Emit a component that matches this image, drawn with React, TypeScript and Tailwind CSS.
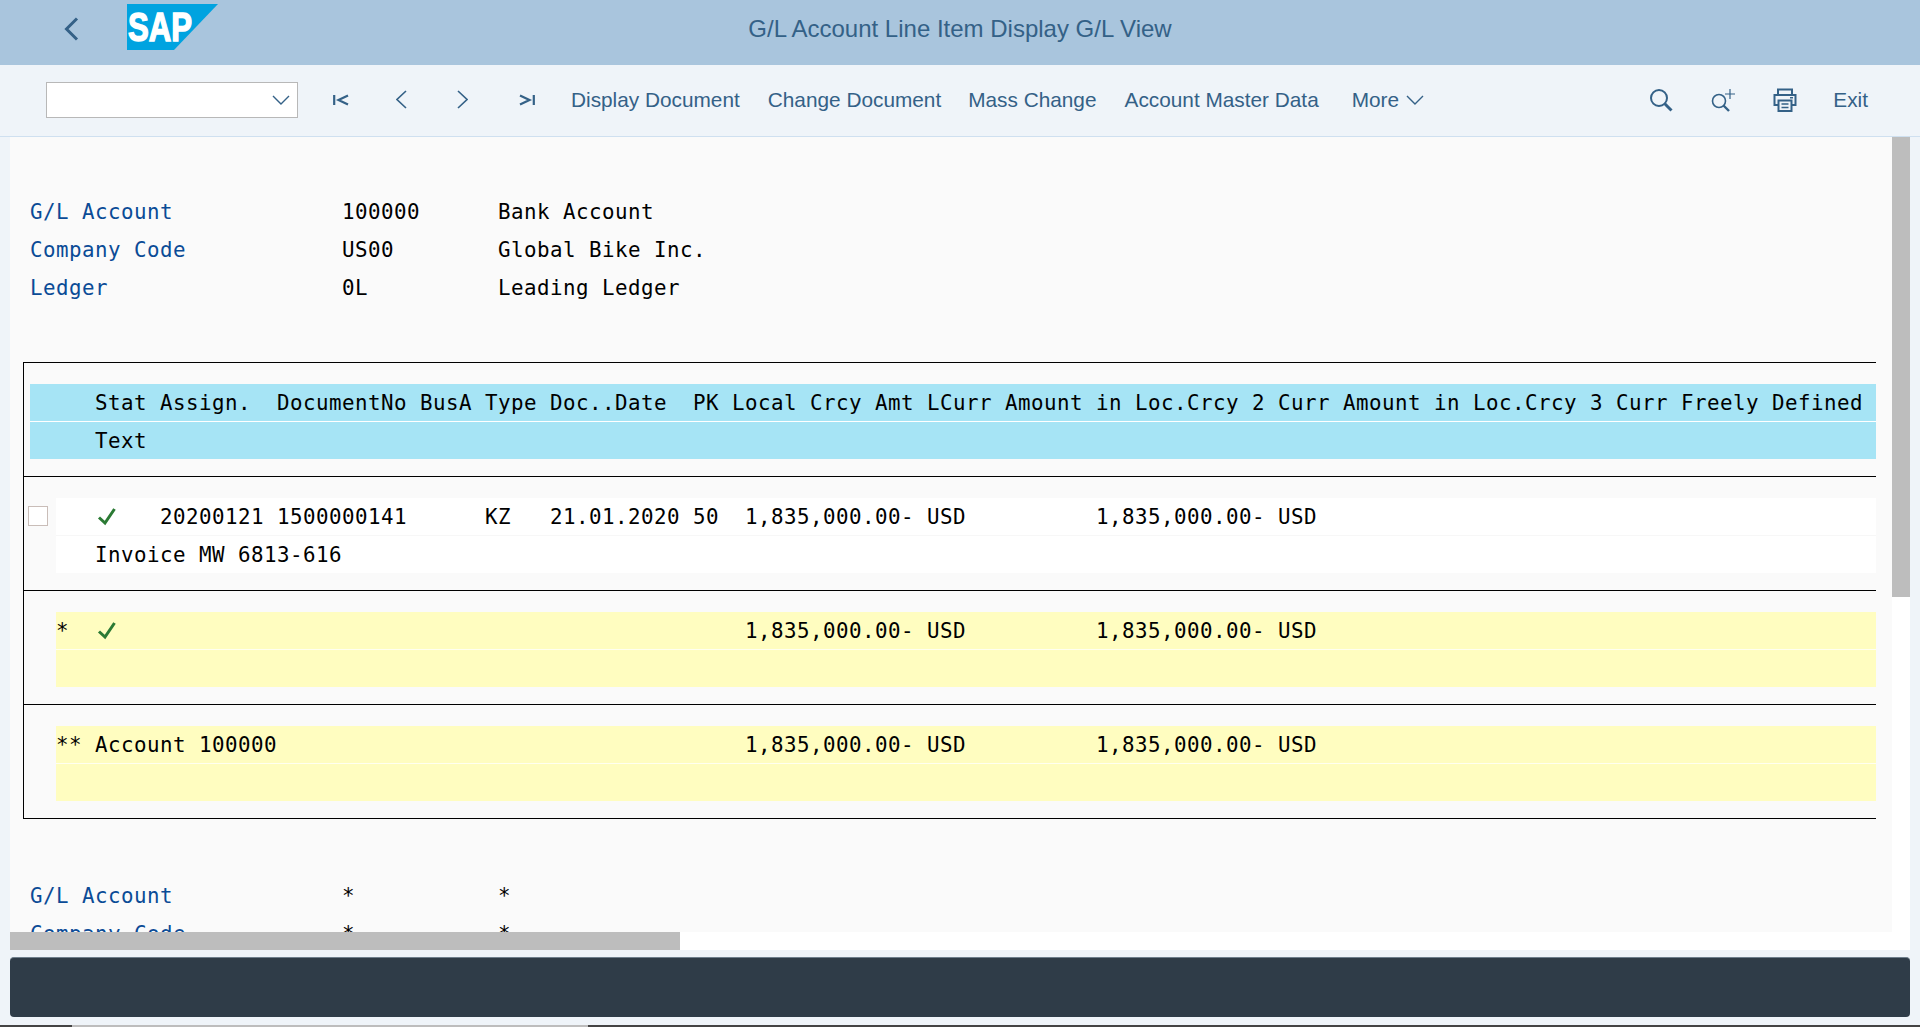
import React from "react"

const monoRow = "h-[38px] leading-[38px] whitespace-pre"
const lastRow = "h-[37px] leading-[39px] whitespace-pre"

function Check() {
    return (
        <span className="inline-block w-[26px] h-[38px] align-top">
            <svg width="26" height="38" viewBox="0 0 26 38" fill="none">
                <path d="M4 19.5 L10 25 L19.5 11" stroke="#2b7a34" strokeWidth="3" />
            </svg>
        </span>
    )
}

function Chevron({ dir, w, h }: { dir: "left" | "right", w: number, h: number }) {
    const d = dir === "left" ? `M${w - 1} 1 L1 ${h / 2} L${w - 1} ${h - 1}` : `M1 1 L${w - 1} ${h / 2} L1 ${h - 1}`
    return (
        <svg width={w} height={h} viewBox={`0 0 ${w} ${h}`} fill="none" className="shrink-0">
            <path d={d} stroke="#346187" strokeWidth="1.6" />
        </svg>
    )
}

function Header() {
    return (
        <div className="h-[65px] shrink-0 bg-[#a9c5dd] pb-[8px] grid grid-cols-[1fr_auto_1fr] items-center">
            <div className="flex items-center">
                <div className="ml-[64px]">
                    <svg width="15" height="24" viewBox="0 0 15 24" fill="none">
                        <path d="M13 1.5 L2.5 12 L13 22.5" stroke="#346187" strokeWidth="3" />
                    </svg>
                </div>
                <div className="ml-[47px] mb-[3px]">
                    <svg width="92" height="46" viewBox="0 0 92 46">
                        <polygon points="1,0 92,0 48,46 1,46" fill="#00a3e0" />
                        <text x="2" y="37" textLength="64" lengthAdjust="spacingAndGlyphs" fontFamily="Liberation Sans" fontWeight="700" fontSize="40" stroke="#fff" strokeWidth="1.5" fill="#fff">SAP</text>
                    </svg>
                </div>
            </div>
            <div className="text-[24px] text-[#346187] font-['Liberation_Sans',Arial,sans-serif]">G/L Account Line Item Display G/L View</div>
            <div />
        </div>
    )
}

function Toolbar() {
    return (
        <div className="h-[72px] shrink-0 pb-[2px] bg-[#eff4f9] border-b border-[#cfe0f0] flex items-center text-[20.8px] text-[#346187] font-['Liberation_Sans',Arial,sans-serif]">
            <div className="ml-[46px] w-[252px] h-[36px] bg-white border border-[#b8b8b8] flex items-center justify-end pr-[7px]">
                <svg width="18" height="10" viewBox="0 0 18 10" fill="none">
                    <path d="M1 1 L9 9 L17 1" stroke="#346187" strokeWidth="1.4" />
                </svg>
            </div>
            <svg width="16" height="12" viewBox="0 0 16 12" fill="none" className="ml-[35px]">
                <path d="M1.2 1 V11 M15 1.5 L5.5 6 L15 10.5" stroke="#346187" strokeWidth="2.2" />
            </svg>
            <div className="ml-[47px]"><Chevron dir="left" w={11} h={19} /></div>
            <div className="ml-[50px]"><Chevron dir="right" w={11} h={19} /></div>
            <svg width="16" height="12" viewBox="0 0 16 12" fill="none" className="ml-[51px]">
                <path d="M14.8 1 V11 M1 1.5 L10.5 6 L1 10.5" stroke="#346187" strokeWidth="2.2" />
            </svg>
            <div className="ml-[36px]">Display Document</div>
            <div className="ml-[28px]">Change Document</div>
            <div className="ml-[27px]">Mass Change</div>
            <div className="ml-[28px]">Account Master Data</div>
            <div className="ml-[33px]">More</div>
            <svg width="18" height="10" viewBox="0 0 18 10" fill="none" className="ml-[7px]">
                <path d="M1 1 L9 9 L17 1" stroke="#346187" strokeWidth="1.4" />
            </svg>
            <div className="ml-auto pr-[52px] flex items-center">
                <svg width="24" height="24" viewBox="0 0 24 24" fill="none">
                    <circle cx="10" cy="10" r="8" stroke="#346187" strokeWidth="2" />
                    <path d="M15.8 15.8 L22.5 22.5" stroke="#346187" strokeWidth="3" />
                </svg>
                <svg width="26" height="24" viewBox="0 0 26 24" fill="none" className="ml-[38px]">
                    <circle cx="8" cy="13" r="6.5" stroke="#346187" strokeWidth="1.6" />
                    <path d="M12.5 17.5 L18 23" stroke="#346187" strokeWidth="2.4" />
                    <path d="M19 1 V11 M14 6 H24" stroke="#346187" strokeWidth="1.2" />
                </svg>
                <svg width="24" height="24" viewBox="0 0 24 24" fill="none" className="ml-[36px]">
                    <path d="M5 7 V1.5 H19 V7" stroke="#346187" strokeWidth="2" />
                    <path d="M5 17 H1.5 V7 H22.5 V17 H19" stroke="#346187" strokeWidth="2" />
                    <path d="M5.5 12.5 H18.5 V23 H5.5 Z" stroke="#346187" strokeWidth="2" />
                    <path d="M8.5 16 H15.5 M8.5 19.5 H15.5 M17 9.8 H20" stroke="#346187" strokeWidth="1.6" />
                </svg>
                <div className="ml-[36px]">Exit</div>
            </div>
        </div>
    )
}

function Info({ label, a, b }: { label: string, a: string, b: string }) {
    return (
        <div className={monoRow}>
            <span className="text-[#0a4b96]">{label.padEnd(24, " ")}</span>
            <span className="text-black">{a.padEnd(12, " ")}{b}</span>
        </div>
    )
}

function Block({ children }: { children: React.ReactNode }) {
    return <div className="h-[114px] border-t border-black pt-[21px]">{children}</div>
}

function ListTable() {
    return (
        <div className="mt-[55px] ml-[13px] w-[1853px] border-l border-black text-black">
            <Block>
                <div className="ml-[6px] bg-[#a6e4f5]">
                    <div className={monoRow + " border-b border-white"}>{"     Stat Assign.  DocumentNo BusA Type Doc..Date  PK Local Crcy Amt LCurr Amount in Loc.Crcy 2 Curr Amount in Loc.Crcy 3 Curr Freely Defined"}</div>
                    <div className={lastRow}>{"     Text"}</div>
                </div>
            </Block>
            <Block>
                <div className="flex items-start">
                    <div className="w-[32px] shrink-0 pl-[4px] pt-[8px]">
                        <div className="w-[20px] h-[20px] bg-white border border-[#c9bdb8]" />
                    </div>
                    <div className="flex-1 bg-white">
                        <div className={monoRow + " border-b border-[#f7f7f7]"}>{"   "}<Check />{"   20200121 1500000141      KZ   21.01.2020 50  1,835,000.00- USD          1,835,000.00- USD"}</div>
                        <div className={lastRow}>{"   Invoice MW 6813-616"}</div>
                    </div>
                </div>
            </Block>
            <Block>
                <div className="ml-[32px] bg-[#fffdc0]">
                    <div className={monoRow + " border-b border-[#fffff0]"}>{"*  "}<Check />{"                                                1,835,000.00- USD          1,835,000.00- USD"}</div>
                    <div className="h-[37px]" />
                </div>
            </Block>
            <div className="h-[115px] border-y border-black pt-[21px]">
                <div className="ml-[32px] bg-[#fffdc0]">
                    <div className={monoRow + " border-b border-[#fffff0]"}>{"** Account 100000                                    1,835,000.00- USD          1,835,000.00- USD"}</div>
                    <div className="h-[37px]" />
                </div>
            </div>
        </div>
    )
}

function App() {
    return (
        <div className="h-[1027px] w-full flex flex-col overflow-hidden bg-[#eff4f9]">
            <Header />
            <Toolbar />
            <div className="h-[813px] shrink-0 ml-[10px] mr-[10px] bg-white flex flex-col">
                <div className="h-[795px] flex">
                    <div className="w-[1882px] bg-[#fafafa] overflow-hidden pt-[56px] text-[20.8px] tracking-[0.48px] font-['DejaVu_Sans_Mono',monospace]">
                        <div className="pl-[20px]">
                            <Info label="G/L Account" a="100000" b="Bank Account" />
                            <Info label="Company Code" a="US00" b="Global Bike Inc." />
                            <Info label="Ledger" a="0L" b="Leading Ledger" />
                        </div>
                        <ListTable />
                        <div className="pl-[20px] mt-[58px]">
                            <Info label="G/L Account" a="*" b="*" />
                            <Info label="Company Code" a="*" b="*" />
                        </div>
                    </div>
                    <div className="w-[18px]">
                        <div className="h-[460px] bg-[#bdbdbd]" />
                    </div>
                </div>
                <div className="h-[18px] w-[670px] bg-[#bdbdbd]" />
            </div>
            <div className="mt-[7px] ml-[10px] mr-[10px] h-[60px] shrink-0 rounded-[4px] bg-[#2f3c48] border-t border-[#6f7f8c]" />
            <div className="mt-[8px] h-[2px] shrink-0 flex bg-[#444444]">
                <div className="ml-[72px] w-[516px] bg-[#bdbdbd]" />
            </div>
        </div>
    )
}

export default App
